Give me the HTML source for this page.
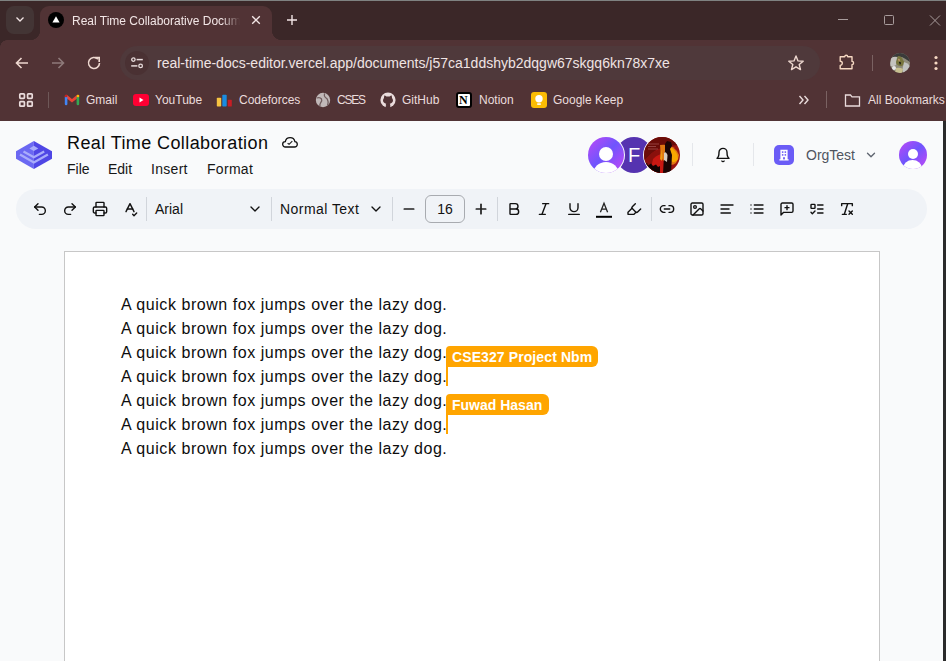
<!DOCTYPE html>
<html><head><meta charset="utf-8">
<style>
*{box-sizing:border-box;margin:0;padding:0}
html,body{width:946px;height:661px;overflow:hidden;background:#f9fafb;font-family:"Liberation Sans",sans-serif}
.a{position:absolute}
svg{display:block}
#chrome{position:absolute;left:0;top:0;width:946px;height:121px;background:#513335}
#tabstrip{position:absolute;left:0;top:0;width:946px;height:40px;background:#3b2728;border-top:1px solid #7f8281}
.ttl{color:#f2e6e6;font-size:12px;white-space:nowrap}
.bm{position:absolute;top:92px;font-size:12px;color:#eadcdc;white-space:nowrap;line-height:16px}
.tb{position:absolute;top:200px}
.sep{position:absolute;width:1px;background:#d1d5db}
.doc{position:absolute;left:121px;font-size:16px;letter-spacing:0.55px;color:#0d0d0d;white-space:nowrap;line-height:24px}
</style></head><body>
<div id="chrome">
  <div id="tabstrip"></div>
  <!-- tab list button -->
  <!-- active tab -->
  <div class="a" style="left:40px;top:6px;width:232px;height:34px;background:#513335;border-radius:9px 9px 0 0"></div>
  <div class="a" style="left:30px;top:30px;width:10px;height:10px;background:radial-gradient(circle at 0 0,#3b2728 10px,#513335 10.5px)"></div>
  <div class="a" style="left:272px;top:30px;width:10px;height:10px;background:radial-gradient(circle at 10px 0,#3b2728 10px,#513335 10.5px)"></div>
  <div class="a" style="left:6px;top:6px;width:28px;height:28px;border-radius:8px;background:#433535"></div>
  <svg class="a" style="left:14px;top:13px" width="12" height="12" viewBox="0 0 12 12"><path d="M2.5 4.5 L6 8 L9.5 4.5" fill="none" stroke="#f3e6e6" stroke-width="1.3"/></svg>
  <div class="a" style="left:0;top:40px;width:7px;height:7px;background:radial-gradient(circle at 7px 7px,#513335 6.5px,#3b2728 7px)"></div>
  <div class="a" style="left:48px;top:12px;width:16px;height:16px;border-radius:50%;background:#000"></div>
  <svg class="a" style="left:48px;top:12px" width="16" height="16" viewBox="0 0 16 16"><path d="M8 4.2 L11.6 10.6 L4.4 10.6 Z" fill="#fff"/></svg>
  <div class="a ttl" style="left:72px;top:14px;width:168px;overflow:hidden;-webkit-mask-image:linear-gradient(90deg,#000 150px,transparent 168px)">Real Time Collaborative Document</div>
  <svg class="a" style="left:250px;top:14px" width="12" height="12" viewBox="0 0 12 12"><path d="M2.2 2.2 L9.8 9.8 M9.8 2.2 L2.2 9.8" stroke="#f3e6e6" stroke-width="1.3"/></svg>
  <svg class="a" style="left:285px;top:13px" width="14" height="14" viewBox="0 0 14 14"><path d="M7 2 V12 M2 7 H12" stroke="#f3e6e6" stroke-width="1.4"/></svg>
  <!-- window controls -->
  <svg class="a" style="left:836px;top:12px" width="14" height="14" viewBox="0 0 14 14"><path d="M2 7.5 H12" stroke="#a89c9c" stroke-width="1"/></svg>
  <svg class="a" style="left:882px;top:13px" width="14" height="14" viewBox="0 0 14 14"><rect x="2.5" y="2.5" width="9" height="9" rx="1" fill="none" stroke="#a89c9c" stroke-width="1"/></svg>
  <svg class="a" style="left:928px;top:13px" width="14" height="14" viewBox="0 0 14 14"><path d="M2 2.5 L12 12.5 M12 2.5 L2 12.5" stroke="#a89c9c" stroke-width="1"/></svg>

  <!-- nav -->
  <svg class="a" style="left:13px;top:54px" width="18" height="18" viewBox="0 0 18 18"><path d="M15 9 H3.5 M8.5 4 L3.5 9 L8.5 14" fill="none" stroke="#eed8d0" stroke-width="1.6"/></svg>
  <svg class="a" style="left:49px;top:54px" width="18" height="18" viewBox="0 0 18 18"><path d="M3 9 H14.5 M9.5 4 L14.5 9 L9.5 14" fill="none" stroke="#8e7a7a" stroke-width="1.6"/></svg>
  <svg class="a" style="left:85px;top:54px" width="18" height="18" viewBox="0 0 18 18"><path d="M14.5 9 A5.5 5.5 0 1 1 12.9 5.1" fill="none" stroke="#eed8d0" stroke-width="1.6"/><path d="M9.8 3.6 H14.2 V8" fill="none" stroke="#eed8d0" stroke-width="1.6"/></svg>
  <!-- omnibox -->
  <div class="a" style="left:120px;top:46px;width:700px;height:34px;border-radius:17px;background:#4f393b"></div>
  <div class="a" style="left:125px;top:51px;width:24px;height:24px;border-radius:12px;background:#4a3133"></div>
  <svg class="a" style="left:128px;top:54px" width="18" height="18" viewBox="0 0 18 18"><circle cx="5.4" cy="5.6" r="1.7" fill="none" stroke="#e8dcdc" stroke-width="1.3"/><path d="M8.6 5.6 H14.8" stroke="#e8dcdc" stroke-width="1.5"/><circle cx="12.6" cy="11.9" r="1.8" fill="none" stroke="#e8dcdc" stroke-width="1.3"/><path d="M3.2 11.9 H9.4" stroke="#e8dcdc" stroke-width="1.5"/></svg>
  <div class="a" style="left:157px;top:55px;font-size:14px;line-height:16px;color:#efe4e4;white-space:nowrap">real-time-docs-editor.vercel.app<span>/documents/j57ca1ddshyb2dqgw67skgq6kn78x7xe</span></div>
  <svg class="a" style="left:787px;top:54px" width="18" height="18" viewBox="0 0 18 18"><path d="M9 2 L11 6.9 L16.2 7.2 L12.2 10.5 L13.5 15.6 L9 12.8 L4.5 15.6 L5.8 10.5 L1.8 7.2 L7 6.9 Z" fill="none" stroke="#eed8d0" stroke-width="1.4" stroke-linejoin="round"/></svg>
  <svg class="a" style="left:837px;top:53px" width="18" height="18" viewBox="0 0 18 18"><path d="M3.2 3.8 H7.7 A1.5 1.5 0 0 1 10.7 3.8 H15 V8.4 A1.6 1.6 0 0 1 15 11.6 V15.8 H3.2 V12.4 A2.1 2.1 0 0 0 3.2 8.2 Z" fill="none" stroke="#f6d8c2" stroke-width="1.4" stroke-linejoin="round"/></svg>
  <div class="a" style="left:872px;top:55px;width:1px;height:16px;background:#7a6262"></div>
  <svg class="a" style="left:890px;top:53px" width="20" height="20" viewBox="0 0 20 20"><defs><clipPath id="pav"><circle cx="10" cy="10" r="10"/></clipPath></defs><g clip-path="url(#pav)">
<rect width="20" height="20" fill="#8f8c7c"/>
<path d="M0 0 H20 V9 Q16 6 12 4 Q6 3 2 5 L0 6 Z" fill="#3a3a3a"/>
<path d="M1 5 Q4 3 7 4 L6 12 Q3 14 0 13 Z" fill="#c4c2be"/>
<path d="M8 3 Q12 3 13 7 L15 10 Q13 14 10 13 Q6 12 6 9 Z" fill="#78763e"/><path d="M8 6 Q9 5 10 7 L9 9 Z" fill="#c89a70"/>
<path d="M9 9 Q10 8 11 10 L10 12 Z" fill="#111"/>
<path d="M14 9 Q18 10 20 13 V20 H13 Q12 15 14 9 Z" fill="#c0c2c0"/>
<path d="M6 15 Q10 14 13 16 L12 20 H5 Z" fill="#c8c090"/>
<circle cx="4" cy="15" r="2" fill="#e8e8e8"/>
</g></svg>
  <svg class="a" style="left:929px;top:53px" width="14" height="20" viewBox="0 0 14 20"><circle cx="7" cy="4.5" r="1.6" fill="#f7d9c4"/><circle cx="7" cy="10" r="1.6" fill="#f7d9c4"/><circle cx="7" cy="15.5" r="1.6" fill="#f7d9c4"/></svg>

  <!-- bookmarks -->
  <svg class="a" style="left:18px;top:92px" width="16" height="16" viewBox="0 0 16 16"><g fill="none" stroke="#eadcdc" stroke-width="1.7"><rect x="1.8" y="1.8" width="4.6" height="4.6" rx="0.8"/><rect x="9.6" y="1.8" width="4.6" height="4.6" rx="0.8"/><rect x="1.8" y="9.6" width="4.6" height="4.6" rx="0.8"/><rect x="9.6" y="9.6" width="4.6" height="4.6" rx="0.8"/></g></svg>
  <div class="a" style="left:48px;top:92px;width:1px;height:16px;background:#6e5858"></div>
  <svg class="a" style="left:64px;top:93px" width="16" height="14" viewBox="0 0 16 14"><path d="M2.2 3.2 L8 7.8 L13.8 3.2" fill="none" stroke="#ea4335" stroke-width="2.8" stroke-linecap="round"/><path d="M2.1 4 V11" stroke="#4285f4" stroke-width="2.6" stroke-linecap="round"/><path d="M13.9 4 V11" stroke="#34a853" stroke-width="2.6" stroke-linecap="round"/><circle cx="14" cy="3" r="1.3" fill="#fbbc04"/><circle cx="2" cy="3" r="1.3" fill="#c5221f"/></svg>
  <div class="bm" style="left:86px">Gmail</div>
  <div class="a" style="left:133px;top:94px;width:16px;height:12px;border-radius:3px;background:#ff0033"></div>
  <svg class="a" style="left:133px;top:94px" width="16" height="12" viewBox="0 0 16 12"><path d="M6.5 3.5 L10.5 6 L6.5 8.5 Z" fill="#fff"/></svg>
  <div class="bm" style="left:155px">YouTube</div>
  <svg class="a" style="left:216px;top:92px" width="16" height="16" viewBox="0 0 16 16"><rect x="0.8" y="5.8" width="4.4" height="8.8" rx="0.8" fill="#f6c341"/><rect x="6.3" y="2.8" width="4.4" height="11.8" rx="0.8" fill="#1a8ce0"/><rect x="11.8" y="7.8" width="4" height="6.8" rx="0.6" fill="#c81d25"/></svg>
  <div class="bm" style="left:239px">Codeforces</div>
  <svg class="a" style="left:315px;top:92px" width="16" height="16" viewBox="0 0 16 16"><circle cx="8" cy="8" r="7.2" fill="#c0b8b8"/><path d="M2 6 Q5 5 6.5 7 Q7.5 9 5.5 11 Q4.5 12.5 5 14.5 M9.5 1.3 Q8.8 4 10.5 5.5 Q12.5 6.5 13 9 Q13.5 11 12.5 13" fill="none" stroke="#6f5c5d" stroke-width="1.3"/></svg>
  <div class="bm" style="left:337px;letter-spacing:-1.2px">CSES</div>
  <svg class="a" style="left:380px;top:92px" width="16" height="16" viewBox="0 0 16 16"><circle cx="8" cy="8" r="7.6" fill="#eadcdc"/><path d="M4.6 3.2 L6.4 4.6 Q8 4.2 9.6 4.6 L11.4 3.2 Q12.2 4.8 12 6 Q13 7 13 8.6 Q12.8 11.2 9.8 11.8 Q10.4 12.6 10.3 14 V16 H5.7 V14 Q5.6 12.6 6.2 11.8 Q3.2 11.2 3 8.6 Q3 7 4 6 Q3.8 4.8 4.6 3.2 Z" fill="#513335"/><path d="M2.8 11.5 Q4.2 11.6 5 12.8 Q5.6 13.6 6 13.4" fill="none" stroke="#eadcdc" stroke-width="1"/></svg>
  <div class="bm" style="left:402px">GitHub</div>
  <div class="a" style="left:456px;top:92px;width:16px;height:16px;border-radius:3px;background:#fff;border:2px solid #000"></div>
  <div class="a" style="left:459px;top:93px;font:bold 12px 'Liberation Serif';color:#000">N</div>
  <div class="bm" style="left:479px">Notion</div>
  <div class="a" style="left:531px;top:92px;width:16px;height:16px;border-radius:3px;background:#fbbc04"></div>
  <svg class="a" style="left:531px;top:92px" width="16" height="16" viewBox="0 0 16 16"><circle cx="8" cy="6.8" r="3.7" fill="#fff"/><rect x="6.2" y="11.3" width="3.6" height="1.6" fill="#fff"/></svg>
  <div class="bm" style="left:553px">Google Keep</div>
  <svg class="a" style="left:797px;top:93px" width="14" height="14" viewBox="0 0 14 14"><path d="M2.5 3 L6 7 L2.5 11 M7.5 3 L11 7 L7.5 11" fill="none" stroke="#eadcdc" stroke-width="1.4"/></svg>
  <div class="a" style="left:826px;top:91px;width:1px;height:17px;background:#7a6262"></div>
  <svg class="a" style="left:844px;top:92px" width="17" height="16" viewBox="0 0 17 16"><path d="M1.5 3 H6.5 L8 4.8 H15.5 V14 H1.5 Z" fill="none" stroke="#eadcdc" stroke-width="1.3"/></svg>
  <div class="bm" style="left:868px">All Bookmarks</div>
</div>
<div class="a" style="left:943px;top:121px;width:3px;height:540px;background:#2b2b2b"></div>

<!-- page header -->
<div class="a" style="left:67px;top:133px;font-size:18px;letter-spacing:0.4px;color:#0a0a0a;white-space:nowrap;line-height:20px">Real Time Collaboration</div>
<div class="a" style="left:67px;top:161px;font-size:14px;color:#161616;white-space:nowrap;line-height:16px">File</div>
<div class="a" style="left:108px;top:161px;font-size:14px;color:#161616;line-height:16px">Edit</div>
<div class="a" style="left:151px;top:161px;font-size:14px;color:#161616;line-height:16px;letter-spacing:0.3px">Insert</div>
<div class="a" style="left:207px;top:161px;font-size:14px;color:#161616;line-height:16px;letter-spacing:0.3px">Format</div>


<!-- logo -->
<svg class="a" style="left:16px;top:140px" width="36" height="30" viewBox="0 0 36 30">
<path d="M17.85 0.9 L0 11.2 L0 18.7 L17.85 29 Z" fill="#6b68f2"/>
<path d="M17.85 0.9 L36 11.2 L36 18.7 L17.85 29 Z" fill="#4f46e5"/>
<path d="M17.85 5.8 L22.3 8.4 L17.85 11 L13.4 8.4 Z" fill="#a9acfb"/>
<path d="M7.5 11.5 L17.85 17.3 L28.2 11.5" fill="none" stroke="#a9acfb" stroke-width="2.3"/>
<path d="M4 14.6 L17.85 22.5 L31.9 14.6" fill="none" stroke="#a9acfb" stroke-width="2.3"/>
</svg>
<!-- cloud -->
<svg class="a" style="left:282px;top:135.7px" width="16" height="12" viewBox="0 0 16 12"><path d="M3.4 11 H12.6 A2.7 2.7 0 0 0 12.9 5.62 A4.9 4.9 0 0 0 3.3 5.6 A2.7 2.7 0 0 0 3.4 11 Z" fill="none" stroke="#111" stroke-width="1.3"/><path d="M5.6 7.2 L7.1 8.3 L10.3 5.1" fill="none" stroke="#222" stroke-width="1.2"/></svg>

<!-- avatars -->
<div class="a" style="left:616px;top:137px;width:36px;height:36px;border-radius:50%;background:#5533b0;color:#fff;font-size:20px;line-height:36px;text-align:center">F</div>
<div class="a" style="left:587px;top:136px;width:38px;height:38px;border-radius:50%;background:#f9fafb"></div>
<div class="a" style="left:588px;top:137px;width:36px;height:36px;border-radius:50%;overflow:hidden;background:linear-gradient(135deg,#a64cf8 15%,#6f55fd 48%,#a64cf8 80%)">
  <div class="a" style="left:11px;top:9.5px;width:14px;height:14px;border-radius:50%;background:#fff"></div>
  <div class="a" style="left:5px;top:25px;width:26px;height:24px;border-radius:50%;background:#fff"></div>
</div>
<div class="a" style="left:643px;top:136px;width:38px;height:38px;border-radius:50%;background:#f9fafb"></div>
<svg class="a" style="left:644px;top:137px" width="36" height="36" viewBox="0 0 36 36">
<defs><clipPath id="av3"><circle cx="18" cy="18" r="18"/></clipPath></defs>
<g clip-path="url(#av3)">
<rect width="36" height="36" fill="#9a1410"/>
<path d="M0 0 H36 V8 Q18 8 8 16 L0 24 Z" fill="#6a0c08"/>
<path d="M0 24 L8 16 Q14 12 20 12 L20 36 H0 Z" fill="#8a100c"/>
<path d="M6 36 L9 22 Q14 17 19 17 L20 36 Z" fill="#c81812"/>
<path d="M16 8 Q30 6 35 18 Q34 28 26 28 Q20 26 17 20 Z" fill="#e07812"/>
<path d="M26 10 Q34 14 34 22 Q31 27 27 24 Z" fill="#f8a800"/>
<path d="M17 12 Q19 18 18 24 L16 22 Z" fill="#f09a10"/>
<path d="M21 7 L23 4 L27 5 L28 9 L26 12 L28 18 L27 36 H19 L20 22 L21 14 Z" fill="#1a0505"/>
<path d="M20 16 Q22 14 23.5 18 L23 25 L20 23 Z" fill="#d8ccc0"/>
<path d="M0 27 L3 26 L4 28.5 L7 26.5 L9 29 L12 27.5 L14 30 L16 29 V36 H0 Z" fill="#120303"/>
<path d="M4 7 H15 M4 9.5 H12 M4 12 H14" stroke="#e0a0a0" stroke-width="0.6" opacity="0.6"/>
</g></svg>
<div class="a" style="left:692px;top:143px;width:1px;height:23px;background:#e5e7eb"></div>
<svg class="a" style="left:715px;top:147px" width="16" height="16" viewBox="0 0 24 24" fill="none" stroke="#111" stroke-width="2.1" stroke-linecap="round" stroke-linejoin="round"><path d="M6 8a6 6 0 0 1 12 0c0 7 3 9 3 9H3s3-2 3-9"/><path d="M10.3 21a1.94 1.94 0 0 0 3.4 0"/></svg>
<div class="a" style="left:753px;top:143px;width:1px;height:23px;background:#e5e7eb"></div>
<div class="a" style="left:774px;top:145px;width:20px;height:20px;border-radius:5px;background:#6b5cf6"></div>
<svg class="a" style="left:777px;top:148px" width="14" height="14" viewBox="0 0 14 14"><path d="M3.4 1.8 H10.6 V11.2 H11.6 V12.6 H2.4 V11.2 H3.4 Z" fill="#fff"/><rect x="4.9" y="3.3" width="1.5" height="1.6" fill="#6b5cf6"/><rect x="7.6" y="3.3" width="1.5" height="1.6" fill="#6b5cf6"/><rect x="4.9" y="6.1" width="1.5" height="1.6" fill="#6b5cf6"/><rect x="7.6" y="6.1" width="1.5" height="1.6" fill="#6b5cf6"/><rect x="6.1" y="9.2" width="1.8" height="2.2" fill="#6b5cf6"/></svg>
<div class="a" style="left:806px;top:147px;font-size:14px;line-height:16px;color:#50555f;white-space:nowrap">OrgTest</div>
<svg class="a" style="left:864px;top:148px" width="14" height="14" viewBox="0 0 24 24" fill="none" stroke="#5f6570" stroke-width="2.3" stroke-linecap="round" stroke-linejoin="round"><path d="m6 9 6 6 6-6"/></svg>
<div class="a" style="left:899px;top:141px;width:28px;height:28px;border-radius:50%;overflow:hidden;background:linear-gradient(135deg,#a64cf8 15%,#6f55fd 48%,#a64cf8 80%)">
  <div class="a" style="left:8.5px;top:7.5px;width:10.5px;height:10.5px;border-radius:50%;background:#fff"></div>
  <div class="a" style="left:4px;top:19px;width:19px;height:17px;border-radius:50%;background:#fff"></div>
</div>

<!-- toolbar -->
<div class="a" style="left:16px;top:189px;width:911px;height:40px;border-radius:20px;background:#f0f3f7"></div>

<svg class="a" style="left:32px;top:201px" width="16" height="16" viewBox="0 0 24 24" fill="none" stroke="#111" stroke-width="2.1" stroke-linecap="round" stroke-linejoin="round"><path d="M9 14 4 9l5-5"/><path d="M4 9h10.5a5.5 5.5 0 0 1 5.5 5.5a5.5 5.5 0 0 1-5.5 5.5H11"/></svg>
<svg class="a" style="left:62px;top:201px" width="16" height="16" viewBox="0 0 24 24" fill="none" stroke="#111" stroke-width="2.1" stroke-linecap="round" stroke-linejoin="round"><path d="m15 14 5-5-5-5"/><path d="M20 9H9.5A5.5 5.5 0 0 0 4 14.5A5.5 5.5 0 0 0 9.5 20H13"/></svg>
<svg class="a" style="left:92px;top:201px" width="16" height="16" viewBox="0 0 24 24" fill="none" stroke="#111" stroke-width="2.1" stroke-linecap="round" stroke-linejoin="round"><path d="M6 18H4a2 2 0 0 1-2-2v-5a2 2 0 0 1 2-2h16a2 2 0 0 1 2 2v5a2 2 0 0 1-2 2h-2"/><path d="M6 9V3a1 1 0 0 1 1-1h10a1 1 0 0 1 1 1v6"/><rect x="6" y="14" width="12" height="8" rx="1"/></svg>
<svg class="a" style="left:122px;top:201px" width="16" height="16" viewBox="0 0 24 24" fill="none" stroke="#111" stroke-width="2.1" stroke-linecap="round" stroke-linejoin="round"><path d="m6 16 6-12 6 12"/><path d="M8 12h8"/><path d="m16 20 2 2 4-4"/></svg>
<div class="sep" style="left:146px;top:197px;height:24px"></div>
<div class="sep" style="left:271px;top:197px;height:24px"></div>
<div class="sep" style="left:392px;top:197px;height:24px"></div>
<div class="sep" style="left:497px;top:197px;height:24px"></div>
<div class="sep" style="left:651px;top:197px;height:24px"></div>
<div class="a" style="left:155px;top:201px;font-size:14px;line-height:16px;color:#111">Arial</div>
<svg class="a" style="left:247px;top:201px" width="16" height="16" viewBox="0 0 24 24" fill="none" stroke="#111" stroke-width="2" stroke-linecap="round" stroke-linejoin="round"><path d="m6 9 6 6 6-6"/></svg>
<div class="a" style="left:280px;top:201px;font-size:14px;line-height:16px;color:#111;letter-spacing:0.45px;white-space:nowrap">Normal Text</div>
<svg class="a" style="left:368px;top:201px" width="16" height="16" viewBox="0 0 24 24" fill="none" stroke="#111" stroke-width="2" stroke-linecap="round" stroke-linejoin="round"><path d="m6 9 6 6 6-6"/></svg>
<svg class="a" style="left:401px;top:201px" width="16" height="16" viewBox="0 0 24 24" fill="none" stroke="#222" stroke-width="2.6" stroke-linecap="round" stroke-linejoin="round"><path d="M5 12h14"/></svg>
<div class="a" style="left:425px;top:195px;width:40px;height:28px;border:1px solid #a8abb0;border-radius:6px;font-size:14px;line-height:26px;text-align:center;color:#111">16</div>
<svg class="a" style="left:473px;top:201px" width="16" height="16" viewBox="0 0 24 24" fill="none" stroke="#222" stroke-width="2.6" stroke-linecap="round" stroke-linejoin="round"><path d="M5 12h14"/><path d="M12 5v14"/></svg>
<svg class="a" style="left:506px;top:201px" width="16" height="16" viewBox="0 0 24 24" fill="none" stroke="#111" stroke-width="2.1" stroke-linecap="round" stroke-linejoin="round"><path d="M6 12h9a4 4 0 0 1 0 8H7a1 1 0 0 1-1-1V5a1 1 0 0 1 1-1h7a4 4 0 0 1 0 8"/></svg>
<svg class="a" style="left:536px;top:201px" width="16" height="16" viewBox="0 0 24 24" fill="none" stroke="#111" stroke-width="2.1" stroke-linecap="round" stroke-linejoin="round"><line x1="19" x2="10" y1="4" y2="4"/><line x1="14" x2="5" y1="20" y2="20"/><line x1="15" x2="9" y1="4" y2="20"/></svg>
<svg class="a" style="left:566px;top:201px" width="16" height="16" viewBox="0 0 24 24" fill="none" stroke="#111" stroke-width="2.1" stroke-linecap="round" stroke-linejoin="round"><path d="M6 4v6a6 6 0 0 0 12 0V4"/><line x1="4" x2="20" y1="20" y2="20"/></svg>
<svg class="a" style="left:596px;top:200px" width="16" height="18" viewBox="0 0 16 18"><path d="M4.4 12.3 L8 3.2 L11.6 12.3 M5.7 9.2 H10.3" fill="none" stroke="#222" stroke-width="1.3"/><rect x="0" y="15.8" width="16" height="2" fill="#000"/></svg>
<svg class="a" style="left:626px;top:201px" width="16" height="16" viewBox="0 0 24 24" fill="none" stroke="#111" stroke-width="2.1" stroke-linecap="round" stroke-linejoin="round"><path d="m9 11-6 6v3h9l3-3"/><path d="m22 12-4.6 4.6a2 2 0 0 1-2.8 0l-5.2-5.2a2 2 0 0 1 0-2.8L14 4"/></svg>
<svg class="a" style="left:659px;top:201px" width="16" height="16" viewBox="0 0 24 24" fill="none" stroke="#111" stroke-width="2.1" stroke-linecap="round" stroke-linejoin="round"><path d="M9 17H7A5 5 0 0 1 7 7h2"/><path d="M15 7h2a5 5 0 1 1 0 10h-2"/><line x1="8" x2="16" y1="12" y2="12"/></svg>
<svg class="a" style="left:689px;top:201px" width="16" height="16" viewBox="0 0 24 24" fill="none" stroke="#111" stroke-width="2.1" stroke-linecap="round" stroke-linejoin="round"><rect width="18" height="18" x="3" y="3" rx="2" ry="2"/><circle cx="9" cy="9" r="2"/><path d="m21 15-3.086-3.086a2 2 0 0 0-2.828 0L6 21"/></svg>
<svg class="a" style="left:719px;top:201px" width="16" height="16" viewBox="0 0 24 24" fill="none" stroke="#111" stroke-width="2.1" stroke-linecap="round" stroke-linejoin="round"><path d="M15 12H3"/><path d="M17 18H3"/><path d="M21 6H3"/></svg>
<svg class="a" style="left:749px;top:201px" width="16" height="16" viewBox="0 0 24 24" fill="none" stroke="#111" stroke-width="2.1" stroke-linecap="round" stroke-linejoin="round"><path d="M3 12h.01"/><path d="M3 18h.01"/><path d="M3 6h.01"/><path d="M8 12h13"/><path d="M8 18h13"/><path d="M8 6h13"/></svg>
<svg class="a" style="left:779px;top:201px" width="16" height="16" viewBox="0 0 24 24" fill="none" stroke="#111" stroke-width="2.1" stroke-linecap="round" stroke-linejoin="round"><path d="M21 15a2 2 0 0 1-2 2H7l-4 4V5a2 2 0 0 1 2-2h14a2 2 0 0 1 2 2z"/><path d="M12 7v6"/><path d="M9 10h6"/></svg>
<svg class="a" style="left:809px;top:201px" width="16" height="16" viewBox="0 0 24 24" fill="none" stroke="#111" stroke-width="2.1" stroke-linecap="round" stroke-linejoin="round"><rect x="3" y="5" width="6" height="6" rx="1"/><path d="m3 17 2 2 4-4"/><path d="M13 6h8"/><path d="M13 12h8"/><path d="M13 18h8"/></svg>
<svg class="a" style="left:839px;top:201px" width="16" height="16" viewBox="0 0 24 24" fill="none" stroke="#111" stroke-width="2.1" stroke-linecap="round" stroke-linejoin="round"><path d="M4 7V4h16v3"/><path d="M5 20h6"/><path d="M13 4 8 20"/><path d="m15 15 5 5"/><path d="m20 15-5 5"/></svg>

<!-- paper -->
<div class="a" style="left:64px;top:251px;width:816px;height:420px;background:#fff;border:1px solid #c7c7c7"></div>
<div class="doc" style="top:293px">A quick brown fox jumps over the lazy dog.</div>
<div class="doc" style="top:317px">A quick brown fox jumps over the lazy dog.</div>
<div class="doc" style="top:341px">A quick brown fox jumps over the lazy dog.</div>
<div class="doc" style="top:365px">A quick brown fox jumps over the lazy dog.</div>
<div class="doc" style="top:389px">A quick brown fox jumps over the lazy dog.</div>
<div class="doc" style="top:413px">A quick brown fox jumps over the lazy dog.</div>
<div class="doc" style="top:437px">A quick brown fox jumps over the lazy dog.</div>


<!-- cursors -->
<div class="a" style="left:446px;top:346px;width:152px;height:21px;background:#ffa500;border-radius:4px 6px 6px 0;color:#fff;font-weight:bold;font-size:14px;line-height:20px;padding-left:6px;padding-top:1px;white-space:nowrap;letter-spacing:0.1px">CSE327 Project Nbm</div>
<div class="a" style="left:446px;top:367px;width:2px;height:19px;background:#ffa500"></div>
<div class="a" style="left:446px;top:394px;width:103px;height:21px;background:#ffa500;border-radius:4px 6px 6px 0;color:#fff;font-weight:bold;font-size:14px;line-height:20px;padding-left:6px;padding-top:1px;white-space:nowrap">Fuwad Hasan</div>
<div class="a" style="left:446px;top:415px;width:2px;height:19px;background:#ffa500"></div>
</body></html>
